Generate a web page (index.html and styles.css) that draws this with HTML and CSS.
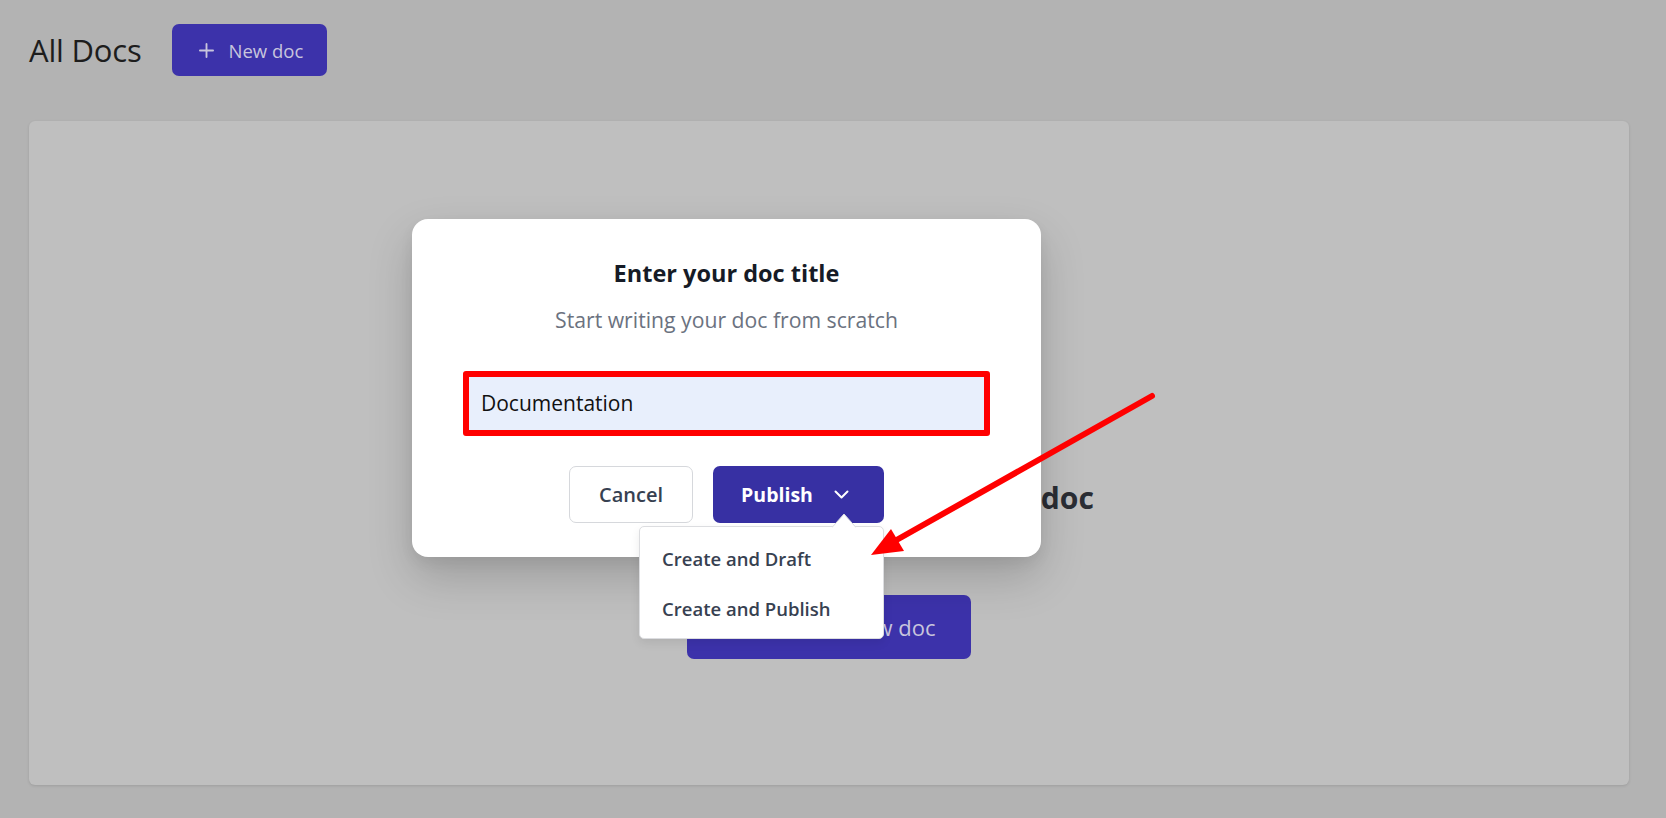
FILE: index.html
```html
<!DOCTYPE html>
<html lang="en">
<head>
<meta charset="utf-8">
<title>All Docs</title>
<link rel="stylesheet" href="styles.css">
</head>
<body>
  <div class="page">
    <header class="page-header">
      <h1 class="page-title">All Docs</h1>
      <button class="btn-primary btn-header">
        <svg class="plus" viewBox="0 0 16 16" width="15" height="15"><path d="M8 1v14M1 8h14" stroke="currentColor" stroke-width="2" stroke-linecap="round" fill="none"/></svg>
        <span>New doc</span>
      </button>
    </header>
    <main class="card">
      <div class="empty">
        <h2 class="empty-title">Start by creating your first new doc</h2>
        <button class="btn-primary btn-large">
          <svg class="plus" viewBox="0 0 16 16" width="18" height="18"><path d="M8 1v14M1 8h14" stroke="currentColor" stroke-width="2" stroke-linecap="round" fill="none"/></svg>
          <span>Create a new doc</span>
        </button>
      </div>
    </main>
  </div>

  <div class="modal">
    <h3 class="modal-title">Enter your doc title</h3>
    <p class="modal-sub">Start writing your doc from scratch</p>
    <div class="input">Documentation</div>
    <div class="actions">
      <button class="btn-cancel">Cancel</button>
      <div class="publish-wrap">
        <button class="btn-publish">
          <span>Publish</span>
          <svg viewBox="0 0 15 9" width="15" height="9"><path d="M1.5 1.5l6 6 6-6" stroke="#fff" stroke-width="2" fill="none" stroke-linecap="round" stroke-linejoin="round"/></svg>
        </button>
        <div class="menu">
          <svg class="menu-caret" viewBox="0 0 24 15" width="24" height="15"><path d="M0 14.5 L12 1 L24 14.5" fill="#fff" stroke="#dcdde0" stroke-width="1"/></svg>
          <div class="menu-item">Create and Draft</div>
          <div class="menu-item">Create and Publish</div>
        </div>
      </div>
    </div>
  </div>

  <svg class="annotation" viewBox="0 0 1666 818" width="1666" height="818">
    <line x1="1152" y1="396" x2="893" y2="542" stroke="#ff0000" stroke-width="6" stroke-linecap="round"/>
    <polygon points="871,555 891,529 904,551" fill="#ff0000"/>
  </svg>
</body>
</html>
```

FILE: styles.css
```css
* { box-sizing: border-box; }

html, body {
  margin: 0;
  padding: 0;
}

body {
  background: #b3b3b3;
  font-family: "Open Sans", "Noto Sans", "Liberation Sans", sans-serif;
  width: 1666px;
  height: 818px;
  overflow: hidden;
  position: relative;
}

button {
  font-family: inherit;
  border: none;
  cursor: pointer;
}

.page {
  padding: 24px 37px 0 29px;
}

.page-header {
  display: flex;
  align-items: center;
  gap: 31px;
  height: 52px;
}

.page-title {
  margin: 0;
  font-size: 31px;
  font-weight: 400;
  color: #1d1d1d;
  letter-spacing: -0.2px;
}

.btn-primary {
  display: flex;
  align-items: center;
  background: #3c32aa;
  color: #c8c5dd;
  border-radius: 7px;
}

.btn-header {
  height: 52px;
  width: 155px;
  padding: 0 0 0 27px;
  gap: 14px;
  font-size: 18.5px;
}

.card {
  margin-top: 45px;
  height: 664px;
  background: #bfbfbf;
  border-radius: 6px;
  box-shadow: 0 1px 3px rgba(0, 0, 0, 0.12);
}

.empty {
  display: flex;
  flex-direction: column;
  align-items: center;
  padding-top: 359px;
}

.empty-title {
  margin: 0;
  font-size: 30.1px;
  line-height: 36px;
  font-weight: 700;
  color: #2a2d34;
}

.btn-large {
  margin-top: 79px;
  height: 64px;
  padding: 0 35px 0 41px;
  gap: 12px;
  font-size: 22px;
}

.modal {
  position: absolute;
  left: 412px;
  top: 219px;
  width: 629px;
  height: 338px;
  background: #fff;
  border-radius: 16px;
  padding: 38px 51px 34px;
  box-shadow: 0 20px 45px rgba(0, 0, 0, 0.18), 0 6px 14px rgba(0, 0, 0, 0.06);
  display: flex;
  flex-direction: column;
  align-items: center;
}

.modal-title {
  margin: 0;
  font-size: 23.5px;
  line-height: 32px;
  font-weight: 700;
  color: #161b26;
}

.modal-sub {
  margin: 17px 0 0;
  font-size: 21.2px;
  line-height: 28px;
  color: #6b7280;
}

.input {
  margin-top: 37px;
  width: 100%;
  height: 65px;
  border: 6px solid #ff0000;
  border-radius: 3px;
  background: #e8effc;
  padding-left: 12px;
  font-size: 21px;
  line-height: 53px;
  color: #111;
}

.actions {
  margin-top: 30px;
  display: flex;
  gap: 20px;
}

.btn-cancel {
  height: 57px;
  padding: 0 29px;
  background: #fff;
  border: 1px solid #d6d8dc;
  border-radius: 7px;
  font-size: 20px;
  font-weight: 600;
  color: #374151;
}

.publish-wrap {
  position: relative;
}

.btn-publish {
  height: 57px;
  display: flex;
  align-items: center;
  gap: 21px;
  padding: 0 35px 0 28px;
  background: #3730a3;
  border-radius: 7px;
  color: #fff;
  font-size: 19.5px;
  font-weight: 700;
}

.menu {
  position: absolute;
  top: 60px;
  left: -74px;
  width: 245px;
  padding: 7px 0 4px;
  background: #fff;
  border: 1px solid #dcdde0;
  border-radius: 5px;
  box-shadow: 0 4px 10px rgba(0, 0, 0, 0.08);
}

.menu-caret {
  position: absolute;
  top: -14px;
  left: 192px;
  display: block;
}

.menu-item {
  height: 50px;
  line-height: 50px;
  padding-left: 22px;
  font-size: 18.5px;
  font-weight: 600;
  color: #374151;
}

.annotation {
  position: absolute;
  top: 0;
  left: 0;
  pointer-events: none;
}
```
